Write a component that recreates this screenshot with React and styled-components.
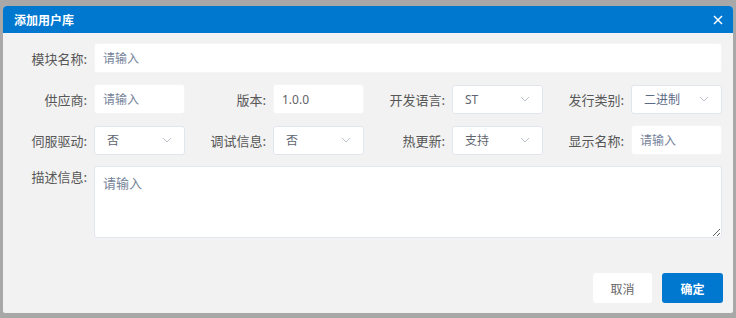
import React from "react";
import styled, { createGlobalStyle } from "styled-components";

const Global = createGlobalStyle`
  html, body { margin: 0; padding: 0; background: #a8a8a8; }
  body { font-family: "Noto Sans", "Noto Sans CJK SC", sans-serif; }
  * { box-sizing: border-box; }
`;

const Page = styled.div`
  width: 736px;
  height: 318px;
  padding: 6px 3px 0 3px;
  background: #a8a8a8;
`;

const Dialog = styled.div`
  width: 730px;
  height: 307px;
  background: #f2f2f2;
  border-radius: 4px 4px 2px 2px;
  overflow: hidden;
  display: flex;
  flex-direction: column;
`;

const Header = styled.div`
  height: 27px;
  flex: none;
  background: #0078d0;
  display: flex;
  align-items: center;
  justify-content: space-between;
  padding: 0 9px 0 11px;
`;

const Title = styled.div`
  color: #fff;
  font-size: 12px;
  font-weight: 700;
  font-family: "Noto Sans CJK SC", sans-serif;
  letter-spacing: 0;
`;

const Close = styled.button`
  width: 12px;
  height: 12px;
  padding: 0;
  border: 0;
  background: transparent;
  display: flex;
  align-items: center;
  justify-content: center;
  cursor: pointer;
`;

const Body = styled.div`
  flex: 1;
  display: flex;
  flex-direction: column;
  padding: 10px 11px 10px 3px;
`;

const Form = styled.div`
  display: flex;
  flex-direction: column;
  gap: 11px;
`;

const Row = styled.div`
  display: grid;
  grid-template-columns: ${(p) => (p.$wide ? "88px 1fr" : "repeat(4, 88px 91px)")};
  align-items: ${(p) => (p.$top ? "start" : "center")};
`;

const Label = styled.label`
  font-family: "Noto Sans CJK SC", sans-serif;
  font-size: 13px;
  color: #575757;
  text-align: right;
  padding-right: 7px;
  white-space: nowrap;
  padding-top: ${(p) => (p.$top ? "1px" : "0")};
`;

const TextInput = styled.input`
  height: 30px;
  width: 100%;
  border: 1px solid #f4f5f7;
  border-radius: 3px;
  background: #fff;
  padding: 0 8px;
  font-family: "Noto Sans", "Noto Sans CJK SC", sans-serif;
  font-size: 12px;
  color: #606266;
  outline: none;
  &::placeholder { color: #76839a; }
`;

const SelectBox = styled.div`
  height: 29px;
  width: 100%;
  border: 1px solid #e1e6ee;
  border-radius: 3px;
  background: #fff;
  padding: 0 12px 0 12px;
  display: flex;
  align-items: center;
  justify-content: space-between;
  font-family: "Noto Sans", "Noto Sans CJK SC", sans-serif;
  font-size: 12px;
  color: ${(p) => (p.$blue ? "#5b6b85" : "#5f6470")};
`;

const TextArea = styled.textarea`
  height: 72px;
  width: 100%;
  border: 1px solid #e2e6ed;
  border-radius: 3px;
  background: #fff;
  padding: 6px 8px;
  font-family: "Noto Sans CJK SC", sans-serif;
  font-size: 13px;
  color: #606266;
  outline: none;
  resize: both;
  display: block;
  &::placeholder { color: #76839a; }
`;

const Footer = styled.div`
  margin-top: auto;
  display: flex;
  justify-content: flex-end;
  gap: 10px;
`;

const Button = styled.button`
  height: 30px;
  width: ${(p) => (p.$primary ? "61px" : "59px")};
  border: 0;
  border-radius: 3px;
  background: ${(p) => (p.$primary ? "#0078d0" : "#fff")};
  color: ${(p) => (p.$primary ? "#fff" : "#666")};
  font-weight: ${(p) => (p.$primary ? 700 : 400)};
  font-family: "Noto Sans CJK SC", sans-serif;
  font-size: 12px;
  padding: 0;
  margin-right: ${(p) => (p.$primary ? "-1px" : "0")};
`;

const Chevron = () => (
  <svg width="10" height="6" viewBox="0 0 10 6" fill="none">
    <path d="M1 1l4 4 4-4" stroke="#b9c0cc" strokeWidth="1" />
  </svg>
);

const Select = ({ value, blue }) => (
  <SelectBox $blue={blue}>
    <span>{value}</span>
    <Chevron />
  </SelectBox>
);

export default function App() {
  return (
    <>
      <Global />
      <Page>
        <Dialog>
          <Header>
            <Title>添加用户库</Title>
            <Close aria-label="close">
              <svg width="10" height="10" viewBox="0 0 10 10">
                <path d="M1 1l8 8M9 1l-8 8" stroke="#fff" strokeWidth="1.5" />
              </svg>
            </Close>
          </Header>
          <Body>
            <Form>
              <Row $wide>
                <Label>模块名称:</Label>
                <TextInput placeholder="请输入" />
              </Row>
              <Row>
                <Label>供应商:</Label>
                <TextInput placeholder="请输入" />
                <Label>版本:</Label>
                <TextInput defaultValue="1.0.0" />
                <Label>开发语言:</Label>
                <Select value="ST" />
                <Label>发行类别:</Label>
                <Select value="二进制" blue />
              </Row>
              <Row>
                <Label>伺服驱动:</Label>
                <Select value="否" />
                <Label>调试信息:</Label>
                <Select value="否" />
                <Label>热更新:</Label>
                <Select value="支持" />
                <Label>显示名称:</Label>
                <TextInput placeholder="请输入" />
              </Row>
              <Row $wide $top>
                <Label $top>描述信息:</Label>
                <TextArea placeholder="请输入" />
              </Row>
            </Form>
            <Footer>
              <Button>取消</Button>
              <Button $primary>确定</Button>
            </Footer>
          </Body>
        </Dialog>
      </Page>
    </>
  );
}
